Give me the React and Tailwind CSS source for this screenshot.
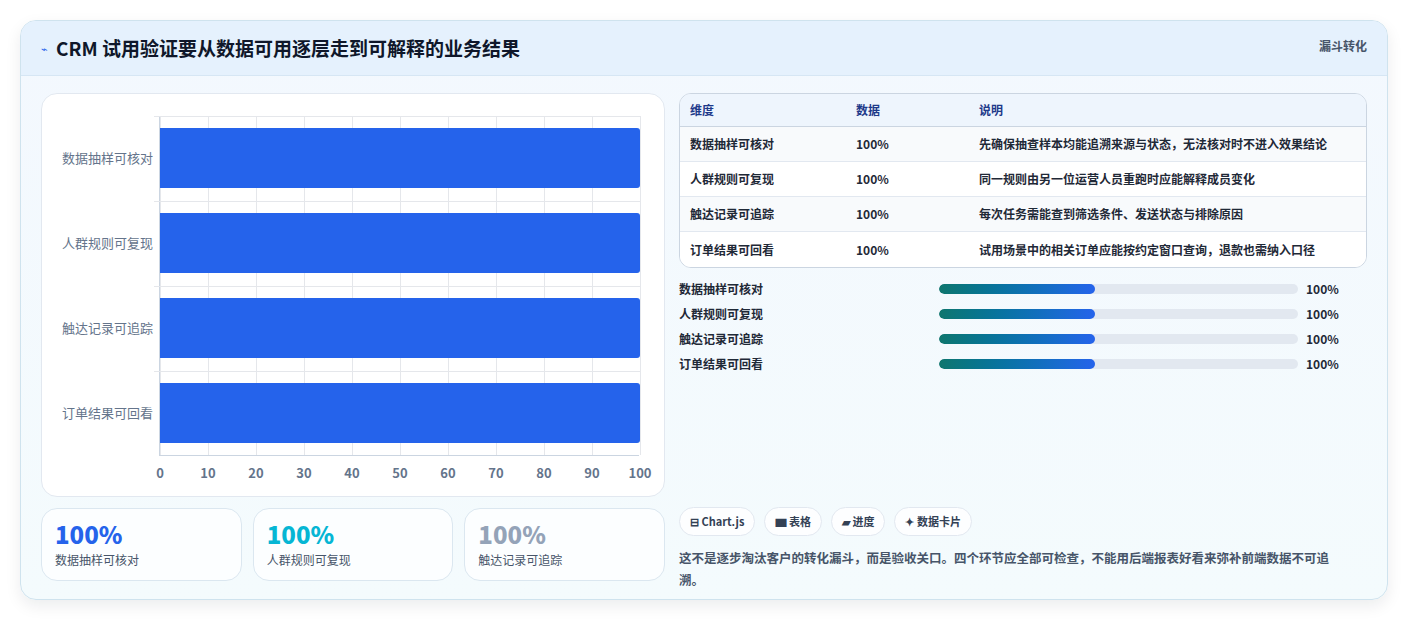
export default function App() {
  const rows = [
    ["数据抽样可核对", "先确保抽查样本均能追溯来源与状态，无法核对时不进入效果结论"],
    ["人群规则可复现", "同一规则由另一位运营人员重跑时应能解释成员变化"],
    ["触达记录可追踪", "每次任务需能查到筛选条件、发送状态与排除原因"],
    ["订单结果可回看", "试用场景中的相关订单应能按约定窗口查询，退款也需纳入口径"],
  ];
  const ticks = [0, 10, 20, 30, 40, 50, 60, 70, 80, 90, 100];
  return (
    <div className="w-[1408px] h-[620px] bg-white pt-5 px-5" style={{ fontFamily: '"Noto Sans CJK SC", "Noto Sans", sans-serif' }}>
      <div className="h-[580px] rounded-2xl border border-[#cfe3ee] bg-gradient-to-b from-[#f3f8fe] to-[#f4fbfd] shadow-[0_6px_16px_rgba(15,23,42,0.08)] overflow-hidden">
        <div className="h-[55px] bg-[#e5f1fd] border-b border-[#d6e6f4] flex items-center justify-between pl-5 pr-5">
          <div className="flex items-center gap-2">
            <span className="text-[11px] text-[#2563eb]">⌁</span>
            <span className="text-[19px] font-bold text-[#0f172a]">CRM 试用验证要从数据可用逐层走到可解释的业务结果</span>
          </div>
          <span className="text-[12px] font-bold text-[#475569] self-start mt-4">漏斗转化</span>
        </div>
        <div className="flex gap-[14px] px-5 pt-[17px]">
          <div className="w-[624px] flex flex-col gap-[11px]">
            <div className="h-[404px] bg-white rounded-2xl border border-[#e2e8f0] relative">
              <div className="absolute left-[117px] top-[22px] w-[480px] h-[340px] border-l border-b border-[#cbd5e1]">
                {ticks.map((t, i) => (
                  <div key={t} className="absolute top-0 h-full border-l border-[#e5e7eb]" style={{ left: i * 48 }} />
                ))}
                {[0, 1, 2, 3].map((i) => (
                  <div key={"h" + i} className="absolute left-[-6px] w-[486px] border-t border-[#e5e7eb]" style={{ top: i * 85 }} />
                ))}
                {rows.map((r, i) => (
                  <div key={r[0]} className="absolute left-0 w-[480px] h-[60px] bg-[#2563eb] rounded-r-[3px]" style={{ top: i * 85 + 12 }} />
                ))}
                {rows.map((r, i) => (
                  <div key={"l" + i} className="absolute right-[486px] text-[13px] text-[#64748b] whitespace-nowrap" style={{ top: i * 85 + 32, fontFamily: '"Noto Sans CJK SC", sans-serif' }}>{r[0]}</div>
                ))}
                {ticks.map((t, i) => (
                  <div key={"t" + t} className="absolute top-[347px] w-8 -ml-4 text-center text-[13px] font-bold text-[#64748b]" style={{ left: i * 48 }}>{t}</div>
                ))}
              </div>
            </div>
            <div className="grid grid-cols-3 gap-[11px]">
              {[["数据抽样可核对", "text-[#2563eb]"], ["人群规则可复现", "text-[#06b6d4]"], ["触达记录可追踪", "text-[#94a3b8]"]].map(([l, c]) => (
                <div key={l} className="h-[73px] bg-white/70 rounded-2xl border border-[#dbe7f0] px-[13px] pt-[10px]">
                  <div className={`text-[24px] leading-[30px] font-extrabold ${c}`}>100%</div>
                  <div className="text-[12px] text-[#475569] mt-[2px]">{l}</div>
                </div>
              ))}
            </div>
          </div>
          <div className="flex-1 flex flex-col">
            <div className="rounded-xl border border-[#cbd5e1] overflow-hidden bg-white/60">
              <div className="flex h-[33px] items-center bg-[#eef5fd] border-b border-[#cbd5e1] text-[12px] font-semibold text-[#1e3a8a]">
                <div className="w-[176px] pl-[10px]">维度</div>
                <div className="w-[123px]">数据</div>
                <div>说明</div>
              </div>
              {rows.map((r, i) => (
                <div key={r[0]} className={`flex h-[35px] items-center text-[12px] font-semibold text-[#1f2937] ${i < 3 ? "border-b border-[#e2e8f0]" : ""} ${i % 2 ? "bg-white" : "bg-[#f8fafc]"}`}>
                  <div className="w-[176px] pl-[10px]">{r[0]}</div>
                  <div className="w-[123px]">100%</div>
                  <div>{r[1]}</div>
                </div>
              ))}
            </div>
            <div className="flex flex-col gap-[7px] mt-[12px]">
              {rows.map((r) => (
                <div key={r[0]} className="flex items-center h-[18px] text-[12px] font-semibold text-[#1f2937]">
                  <div className="w-[260px]">{r[0]}</div>
                  <div className="w-[359px] h-[10px] rounded-full bg-[#e2e8f0] overflow-hidden">
                    <div className="h-full w-[156px] rounded-full bg-gradient-to-r from-[#0f766e] to-[#2563eb]" />
                  </div>
                  <div className="ml-2 font-bold">100%</div>
                </div>
              ))}
            </div>
            <div className="flex gap-[9px] mt-[134px]">
              {["⊟ Chart.js", "▆ 表格", "▰ 进度", "✦ 数据卡片"].map((c) => (
                <span key={c} className="h-[29px] px-[10px] flex items-center rounded-full border border-[#e2e8f0] bg-white/80 text-[11px] font-bold text-[#334155]">{c}</span>
              ))}
            </div>
            <p className="mt-[11px] text-[12.5px] leading-[22px] font-semibold text-[#475569] pr-4">这不是逐步淘汰客户的转化漏斗，而是验收关口。四个环节应全部可检查，不能用后端报表好看来弥补前端数据不可追溯。</p>
          </div>
        </div>
      </div>
    </div>
  );
}
